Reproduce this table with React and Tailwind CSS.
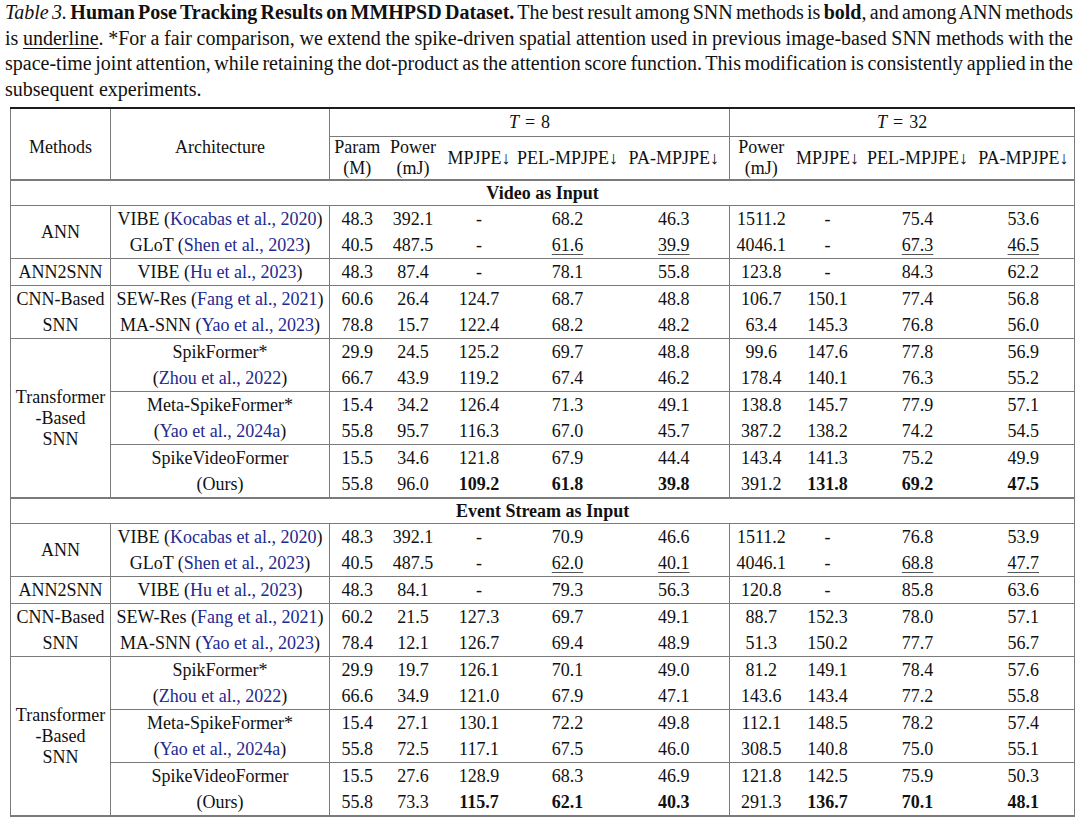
import React from "react";

const THIN = "border-[#7a7a7a]";
const THICK = "border-[#1c1c1c]";

const videoGroups = [
  {
    method: ["ANN"],
    rows: [
      { arch: ["VIBE", "Kocabas et al., 2020"], vals: ["48.3", "392.1", "-", "68.2", "46.3", "1511.2", "-", "75.4", "53.6"] },
      { arch: ["GLoT", "Shen et al., 2023"], vals: ["40.5", "487.5", "-", "_61.6", "_39.9", "4046.1", "-", "_67.3", "_46.5"] },
    ],
  },
  {
    method: ["ANN2SNN"],
    rows: [
      { arch: ["VIBE", "Hu et al., 2023"], vals: ["48.3", "87.4", "-", "78.1", "55.8", "123.8", "-", "84.3", "62.2"] },
    ],
  },
  {
    method: ["CNN-Based", "SNN"],
    rows: [
      { arch: ["SEW-Res", "Fang et al., 2021"], vals: ["60.6", "26.4", "124.7", "68.7", "48.8", "106.7", "150.1", "77.4", "56.8"] },
      { arch: ["MA-SNN", "Yao et al., 2023"], vals: ["78.8", "15.7", "122.4", "68.2", "48.2", "63.4", "145.3", "76.8", "56.0"] },
    ],
  },
  {
    method: ["Transformer", "-Based", "SNN"],
    rows: [
      { arch: ["SpikFormer*"], vals: ["29.9", "24.5", "125.2", "69.7", "48.8", "99.6", "147.6", "77.8", "56.9"] },
      { arch: ["", "Zhou et al., 2022"], vals: ["66.7", "43.9", "119.2", "67.4", "46.2", "178.4", "140.1", "76.3", "55.2"] },
      { sep: true, arch: ["Meta-SpikeFormer*"], vals: ["15.4", "34.2", "126.4", "71.3", "49.1", "138.8", "145.7", "77.9", "57.1"] },
      { arch: ["", "Yao et al., 2024a"], vals: ["55.8", "95.7", "116.3", "67.0", "45.7", "387.2", "138.2", "74.2", "54.5"] },
      { sep: true, arch: ["SpikeVideoFormer"], vals: ["15.5", "34.6", "121.8", "67.9", "44.4", "143.4", "141.3", "75.2", "49.9"] },
      { arch: ["(Ours)"], vals: ["55.8", "96.0", "*109.2", "*61.8", "*39.8", "391.2", "*131.8", "*69.2", "*47.5"] },
    ],
  },
];

const eventGroups = [
  {
    method: ["ANN"],
    rows: [
      { arch: ["VIBE", "Kocabas et al., 2020"], vals: ["48.3", "392.1", "-", "70.9", "46.6", "1511.2", "-", "76.8", "53.9"] },
      { arch: ["GLoT", "Shen et al., 2023"], vals: ["40.5", "487.5", "-", "_62.0", "_40.1", "4046.1", "-", "_68.8", "_47.7"] },
    ],
  },
  {
    method: ["ANN2SNN"],
    rows: [
      { arch: ["VIBE", "Hu et al., 2023"], vals: ["48.3", "84.1", "-", "79.3", "56.3", "120.8", "-", "85.8", "63.6"] },
    ],
  },
  {
    method: ["CNN-Based", "SNN"],
    rows: [
      { arch: ["SEW-Res", "Fang et al., 2021"], vals: ["60.2", "21.5", "127.3", "69.7", "49.1", "88.7", "152.3", "78.0", "57.1"] },
      { arch: ["MA-SNN", "Yao et al., 2023"], vals: ["78.4", "12.1", "126.7", "69.4", "48.9", "51.3", "150.2", "77.7", "56.7"] },
    ],
  },
  {
    method: ["Transformer", "-Based", "SNN"],
    rows: [
      { arch: ["SpikFormer*"], vals: ["29.9", "19.7", "126.1", "70.1", "49.0", "81.2", "149.1", "78.4", "57.6"] },
      { arch: ["", "Zhou et al., 2022"], vals: ["66.6", "34.9", "121.0", "67.9", "47.1", "143.6", "143.4", "77.2", "55.8"] },
      { sep: true, arch: ["Meta-SpikeFormer*"], vals: ["15.4", "27.1", "130.1", "72.2", "49.8", "112.1", "148.5", "78.2", "57.4"] },
      { arch: ["", "Yao et al., 2024a"], vals: ["55.8", "72.5", "117.1", "67.5", "46.0", "308.5", "140.8", "75.0", "55.1"] },
      { sep: true, arch: ["SpikeVideoFormer"], vals: ["15.5", "27.6", "128.9", "68.3", "46.9", "121.8", "142.5", "75.9", "50.3"] },
      { arch: ["(Ours)"], vals: ["55.8", "73.3", "*115.7", "*62.1", "*40.3", "291.3", "*136.7", "*70.1", "*48.1"] },
    ],
  },
];

function Cite({ children }) {
  return <span className="text-[#1d2a8e]">{children}</span>;
}

function Arch({ arch }) {
  const [name, cite] = arch;
  if (!cite) return name;
  if (!name) return <>(<Cite>{cite}</Cite>)</>;
  return <>{name} (<Cite>{cite}</Cite>)</>;
}

function Val({ v }) {
  if (v.startsWith("*")) return <span className="font-bold">{v.slice(1)}</span>;
  if (v.startsWith("_"))
    return <span className="underline decoration-1 underline-offset-[3px] decoration-[#555]">{v.slice(1)}</span>;
  return v;
}

function Section({ title, groups }) {
  return (
    <>
      <tr>
        <td colSpan={11} className={`p-0 h-[24px] leading-[24px] text-center font-bold border-t-2 ${THICK} border-b ${THIN}`}>
          {title}
        </td>
      </tr>
      {groups.map((g, gi) =>
        g.rows.map((r, i) => {
          const top = i === 0 || r.sep ? `border-t ${THIN}` : "";
          return (
            <tr key={`${gi}-${i}`}>
              {i === 0 && (
                <td rowSpan={g.rows.length} className={`p-0 text-center align-middle border-r border-t ${THIN} leading-[21px]`}>
                  {g.method.map((m, k) => (
                    <div key={k} className={g.method.length === 2 ? "leading-[26px]" : ""}>{m}</div>
                  ))}
                </td>
              )}
              <td className={`p-0 h-[26px] leading-[26px] text-center whitespace-nowrap border-r ${THIN} ${top}`}>
                <Arch arch={r.arch} />
              </td>
              {r.vals.map((v, k) => (
                <td
                  key={k}
                  className={`p-0 h-[26px] leading-[26px] text-center whitespace-nowrap ${top} ${k === 4 ? `border-r ${THIN}` : ""}`}
                >
                  <Val v={v} />
                </td>
              ))}
            </tr>
          );
        })
      )}
    </>
  );
}

const arrow = "\u2193";

function TEq({ n }) {
  return (
    <>
      <i>T</i>
      <span className="mx-[6px]">=</span>
      {n}
    </>
  );
}

export default function App() {
  return (
    <div className="w-[1078px] min-h-[831px] bg-white text-[#111] font-['Liberation_Serif',serif]">
      <div className="px-[5px] text-[20px] leading-[25.5px] text-justify">
        <p className="[text-align-last:justify] [word-spacing:-3px]">
          <i>Table 3.</i> <b>Human Pose Tracking Results on MMHPSD Dataset.</b> The best result among SNN methods is{" "}
          <b>bold</b>, and among ANN methods
        </p>
        <p className="[text-align-last:justify] [word-spacing:-3px]">
          is <span className="underline decoration-1 underline-offset-[3px]">underline</span>. *For a fair comparison, we
          extend the spike-driven spatial attention used in previous image-based SNN methods with the
        </p>
        <p className="[text-align-last:justify] [word-spacing:-3px]">
          space-time joint attention, while retaining the dot-product as the attention score function. This modification
          is consistently applied in the
        </p>
        <p>subsequent experiments.</p>
      </div>

      <table className={`mt-[5px] ml-[10px] w-[1064px] table-fixed border-collapse text-[18px] border-x ${THIN} border-y-2`}>
        <colgroup>
          <col className="w-[100px]" />
          <col className="w-[219px]" />
          <col className="w-[55px]" />
          <col className="w-[57px]" />
          <col className="w-[75px]" />
          <col className="w-[102px]" />
          <col className="w-[111px]" />
          <col className="w-[63px]" />
          <col className="w-[70px]" />
          <col className="w-[110px]" />
          <col className="w-[102px]" />
        </colgroup>
        <thead>
          <tr className={`border-t-2 ${THICK}`}>
            <th rowSpan={2} className={`p-0 pt-[6px] font-normal text-center align-middle border-r ${THIN}`}>Methods</th>
            <th rowSpan={2} className={`p-0 pt-[6px] font-normal text-center align-middle border-r ${THIN}`}>Architecture</th>
            <th colSpan={5} className={`p-0 h-[27px] font-normal text-center border-r border-b ${THIN}`}>
              <TEq n="8" />
            </th>
            <th colSpan={4} className={`p-0 h-[27px] font-normal text-center border-b ${THIN}`}>
              <TEq n="32" />
            </th>
          </tr>
          <tr className="h-[42px]">
            <th className="p-0 font-normal text-center leading-[21px]">Param<br />(M)</th>
            <th className="p-0 font-normal text-center leading-[21px]">Power<br />(mJ)</th>
            <th className="p-0 font-normal text-center whitespace-nowrap">MPJPE{arrow}</th>
            <th className="p-0 font-normal text-center whitespace-nowrap">PEL-MPJPE{arrow}</th>
            <th className={`p-0 font-normal text-center whitespace-nowrap border-r ${THIN}`}>PA-MPJPE{arrow}</th>
            <th className="p-0 font-normal text-center leading-[21px]">Power<br />(mJ)</th>
            <th className="p-0 font-normal text-center whitespace-nowrap">MPJPE{arrow}</th>
            <th className="p-0 font-normal text-center whitespace-nowrap">PEL-MPJPE{arrow}</th>
            <th className="p-0 font-normal text-center whitespace-nowrap">PA-MPJPE{arrow}</th>
          </tr>
        </thead>
        <tbody>
          <Section title="Video as Input" groups={videoGroups} />
          <Section title="Event Stream as Input" groups={eventGroups} />
        </tbody>
        <tfoot>
          <tr className={`border-t-2 ${THICK}`} />
        </tfoot>
      </table>
    </div>
  );
}
